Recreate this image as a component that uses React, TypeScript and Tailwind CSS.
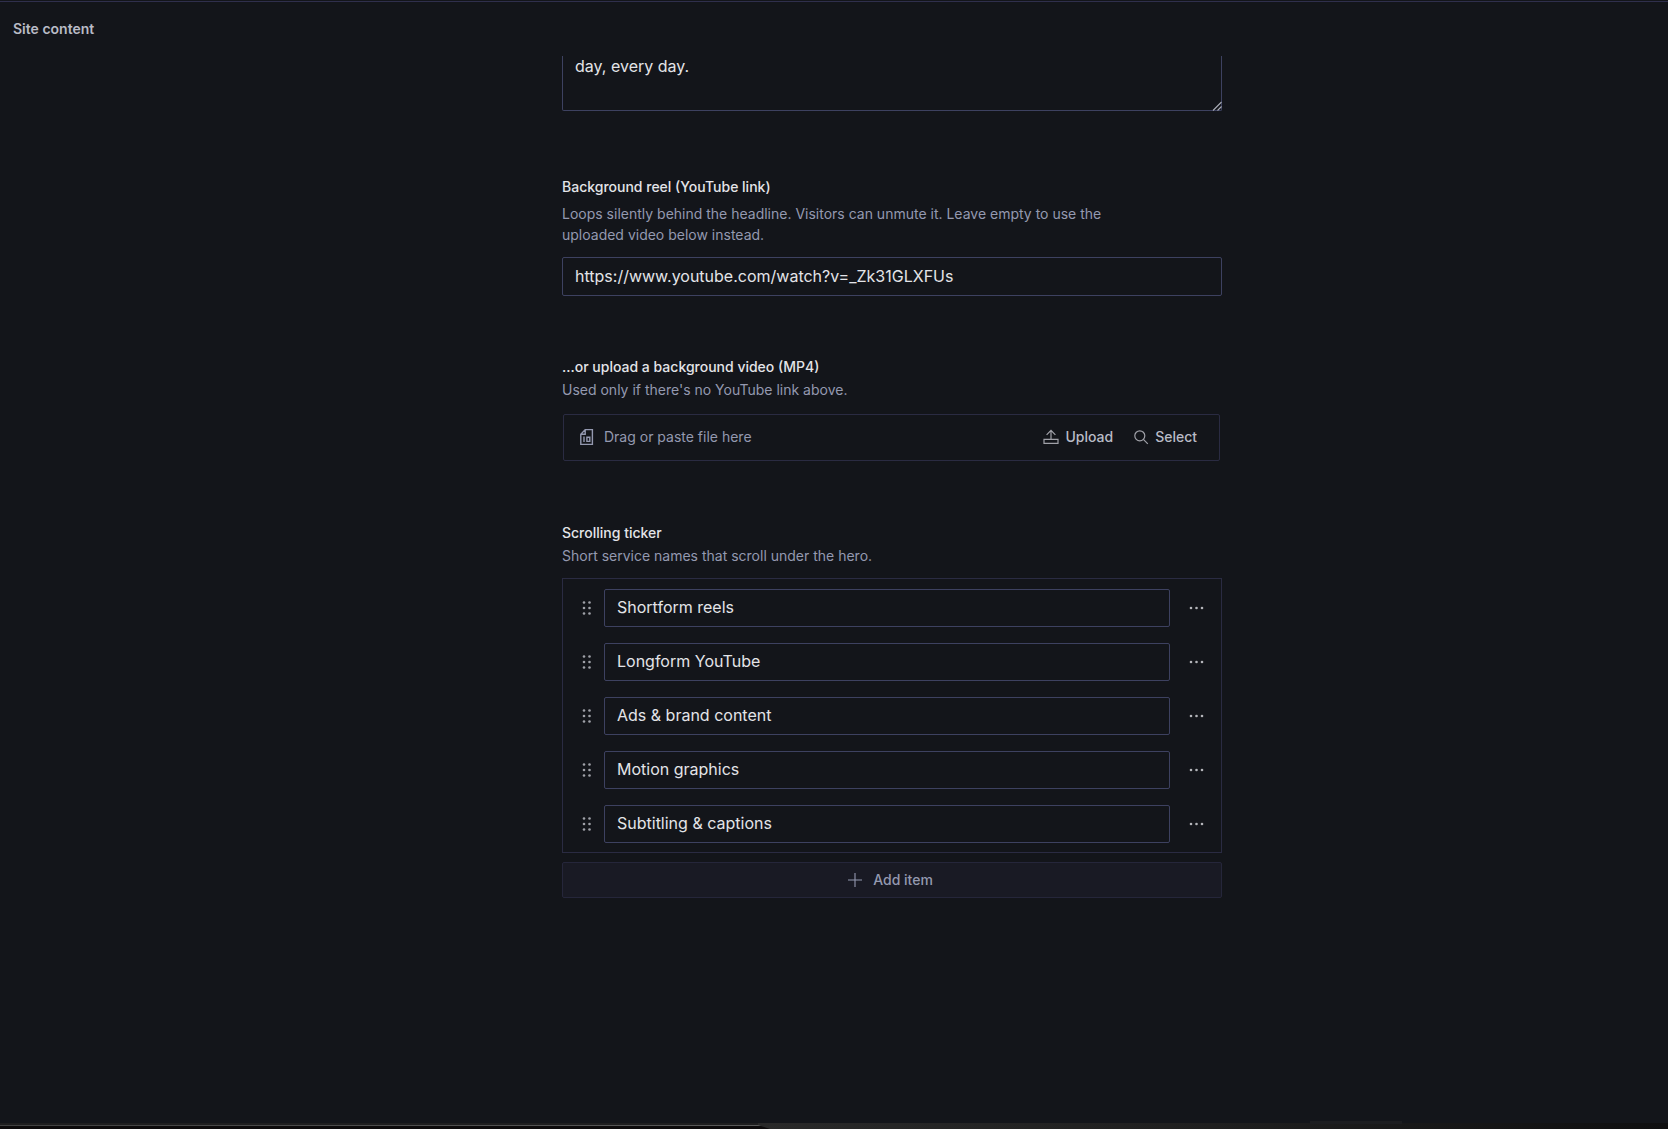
import React from 'react';

const tickerItems = [
  "Shortform reels",
  "Longform YouTube",
  "Ads & brand content",
  "Motion graphics",
  "Subtitling & captions"
];

const inputClass =
  "block w-full rounded-xs border border-[#3d4160] bg-transparent px-3 pb-0.5 text-base text-[#e3e4e8] outline-none";

const DocumentIcon = () => (
  <svg width="14" height="18" viewBox="0 0 14 18" fill="none" stroke="currentColor" strokeWidth="1.4" aria-hidden="true">
    <path d="M5.2 1.6H12.4V16.4H0.8V6.2L5.2 1.6ZM5.2 1.6V6.2H0.8M4 8.6V14M6.9 9.2H9.8V13.4H6.9V9.2Z" />
  </svg>
);

const UploadIcon = () => (
  <svg width="16" height="16" viewBox="0 0 16 16" fill="none" stroke="#a0a1a8" strokeWidth="1.2" aria-hidden="true">
    <path d="M8 10.5V1.5M3.6 5.8L8 1.4L12.4 5.8M1 10.4H15V14.4H1V10.4Z" />
  </svg>
);

const SearchIcon = () => (
  <svg width="16" height="16" viewBox="0 0 16 16" fill="none" stroke="#a0a1a8" strokeWidth="1.2" aria-hidden="true">
    <circle cx="6.8" cy="6.8" r="5" />
    <path d="M10.4 10.4L14.8 14.8" />
  </svg>
);

const AddIcon = () => (
  <svg width="16" height="16" viewBox="0 0 16 16" fill="none" stroke="currentColor" strokeWidth="1.1" aria-hidden="true">
    <path d="M8 1V15M1 8H15" />
  </svg>
);

const DragIcon = () => (
  <svg width="12" height="18" viewBox="0 0 12 18" fill="currentColor" aria-hidden="true">
    <circle cx="3" cy="3.5" r="1.3" />
    <circle cx="8.5" cy="3.5" r="1.3" />
    <circle cx="3" cy="9" r="1.3" />
    <circle cx="8.5" cy="9" r="1.3" />
    <circle cx="3" cy="14.5" r="1.3" />
    <circle cx="8.5" cy="14.5" r="1.3" />
  </svg>
);

const MoreIcon = () => (
  <svg width="18" height="18" viewBox="0 0 18 18" fill="currentColor" aria-hidden="true">
    <circle cx="3" cy="9" r="1.3" />
    <circle cx="8.5" cy="9" r="1.3" />
    <circle cx="14" cy="9" r="1.3" />
  </svg>
);

const ResizeGrip = () => (
  <svg width="10" height="10" viewBox="0 0 10 10" fill="none" stroke="#a9abb5" strokeWidth="1.1" className="pointer-events-none absolute right-0 bottom-0" aria-hidden="true">
    <path d="M1 9.5L9.5 1M5.5 9.5L9.5 5.5" />
  </svg>
);

const BottomEdge = () => (
  <svg viewBox="0 0 1668 8" preserveAspectRatio="none" className="block h-2 w-full" aria-hidden="true">
    <defs>
      <linearGradient id="fade" x1="0" x2="1">
        <stop offset="0" stopColor="#292929" />
        <stop offset="0.5" stopColor="#1f1f1f" />
        <stop offset="1" stopColor="#0f0f10" />
      </linearGradient>
      <linearGradient id="line" x1="0" x2="1">
        <stop offset="0" stopColor="#414141" />
        <stop offset="1" stopColor="#5a5a5a" />
      </linearGradient>
    </defs>
    <rect y="2" width="1668" height="6" fill="#0d0b0c" />
    <rect y="2" width="762" height="2" fill="#1e1e1f" />
    <rect y="4" width="762" height="1" fill="url(#line)" />
    <path d="M758 2H1668V8H770L758 4Z" fill="url(#fade)" />
    <rect x="1310" y="0" width="92" height="3" fill="#1c1d20" />
  </svg>
);

type FieldHeaderProps = {
  title: string;
  description: string;
  htmlFor?: string;
};

const FieldHeader = ({ title, description, htmlFor }: FieldHeaderProps) => (
  <div className="text-sm">
    {htmlFor ? (
      <label htmlFor={htmlFor} className="mb-1.5 block leading-5 font-medium text-[#e3e4e8]">{title}</label>
    ) : (
      <h2 className="mb-0.5 leading-5 font-medium text-[#e3e4e8]">{title}</h2>
    )}
    <p className="max-w-[580px] leading-[21px] text-[#9499b0]">{description}</p>
  </div>
);

const App = () => {
  return (
    <div className="flex min-h-screen flex-col bg-[#13151a] font-['Inter',sans-serif]">
      <header className="mt-px border-t border-[#2f2f4c] px-[13px] py-[17px]">
        <h1 className="text-sm leading-5 font-semibold text-[#b9bbc6]">Site content</h1>
      </header>

      <main className="flex-1 pl-[116px]">
        <div className="mx-auto w-full max-w-[660px]">
          <div className="relative">
            <textarea
              aria-label="Headline description"
              defaultValue="day, every day."
              className="block h-[55px] w-full resize-none rounded-b-xs border border-t-0 border-[#3d4160] bg-transparent px-3 text-base leading-[21px] text-[#e3e4e8] outline-none"
            />
            <ResizeGrip />
          </div>

          <section className="mt-[66px]">
            <FieldHeader
              htmlFor="reel"
              title="Background reel (YouTube link)"
              description="Loops silently behind the headline. Visitors can unmute it. Leave empty to use the uploaded video below instead."
            />
            <input
              id="reel"
              type="text"
              defaultValue="https://www.youtube.com/watch?v=_Zk31GLXFUs"
              className={`mt-3 h-[39px] ${inputClass}`}
            />
          </section>

          <section className="mt-[61px]">
            <FieldHeader
              title="...or upload a background video (MP4)"
              description="Used only if there's no YouTube link above."
            />
            <div className="mt-3.5 mr-0.5 ml-px flex h-[47px] items-center rounded-xs border border-[#2a2b42] pr-[22px] pb-px pl-4 text-sm">
              <span className="text-[#9499b0]"><DocumentIcon /></span>
              <span className="ml-2.5 flex-1 text-[#9499b0]">Drag or paste file here</span>
              <button type="button" className="flex items-center gap-1.5 font-medium text-[#b9bbc6]">
                <UploadIcon />
                Upload
              </button>
              <button type="button" className="ml-5 flex items-center gap-1.5 font-medium text-[#b9bbc6]">
                <SearchIcon />
                Select
              </button>
            </div>
          </section>

          <section className="mt-[62px]">
            <FieldHeader title="Scrolling ticker" description="Short service names that scroll under the hero." />
            <ul className="mt-3 flex flex-col gap-4 border border-[#2a2b42] pt-[10px] pr-[15px] pb-[9px] pl-[18px]">
              {tickerItems.map((item) => (
                <li key={item} className="flex items-center">
                  <button type="button" aria-label={`Move ${item}`} className="mr-[11px] text-[#9fa1a8]">
                    <DragIcon />
                  </button>
                  <input type="text" aria-label="Service name" defaultValue={item} className={`h-[38px] ${inputClass}`} />
                  <button type="button" aria-label={`Options for ${item}`} className="ml-[18px] text-[#b4b5ba]">
                    <MoreIcon />
                  </button>
                </li>
              ))}
            </ul>
            <button
              type="button"
              className="mt-[9px] flex h-9 w-full items-center justify-center gap-2.5 rounded-xs border border-[#25263a] bg-[#191a24] pr-1 text-sm font-medium text-[#9499b0]"
            >
              <AddIcon />
              Add item
            </button>
          </section>
        </div>
      </main>

      <footer>
        <BottomEdge />
      </footer>
    </div>
  );
};

export default App;
